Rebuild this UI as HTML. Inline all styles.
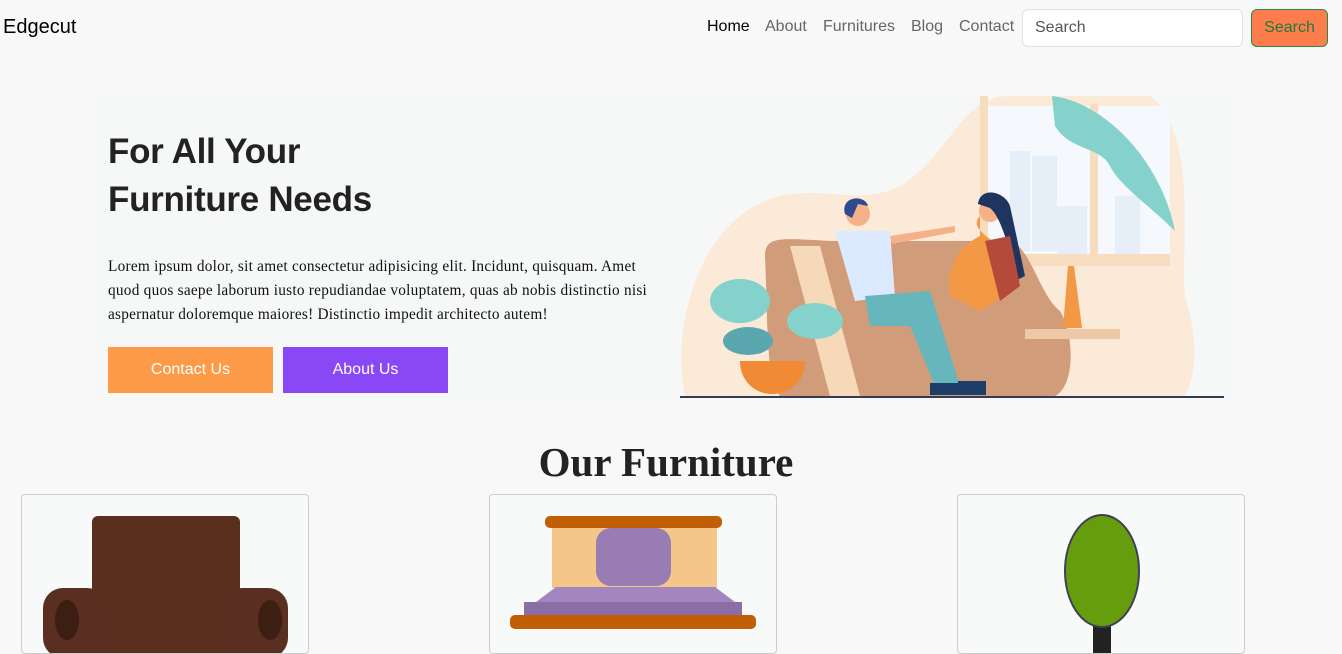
<!DOCTYPE html>
<html><head><meta charset="utf-8"><style>
*{box-sizing:border-box;margin:0;padding:0}
body{width:1342px;height:633px;overflow:hidden;background:#f8f8f8;font-family:"Liberation Sans",sans-serif;position:relative}
.brand{position:absolute;left:3px;top:16px;font-size:20px;color:#000}
.nav{position:absolute;top:18px;font-size:16px;color:#666}
.search{position:absolute;left:1022px;top:9px;width:221px;height:38px;background:#fff;border:1px solid #dee2e6;border-radius:6px;padding:9px 12px;font-size:16px;color:#555}
.btn{position:absolute;left:1251px;top:9px;width:77px;height:38px;background:#fd7e4c;border:1px solid #2a8a4a;border-radius:6px;color:#1f7a3e;font-size:16px;text-align:center;line-height:36px}
.hero{position:absolute;left:96px;top:96px;width:1140px;height:302px;background:#f6f8f8}
h1{position:absolute;left:108px;top:128px;font-size:35px;line-height:48px;color:#222;font-weight:bold;letter-spacing:-0.3px}
p.t{position:absolute;left:108px;top:255px;width:560px;font-family:"Liberation Serif",serif;font-size:15.3px;line-height:24px;color:#111;letter-spacing:0.25px;white-space:nowrap}
.b{position:absolute;top:347px;height:46px;width:165px;color:#fff;font-size:16px;text-align:center;line-height:46px}
h2{position:absolute;left:0;width:1332px;text-align:center;top:438px;font-family:"Liberation Serif",serif;font-size:41px;color:#222;font-weight:bold}
.card{position:absolute;top:494px;width:288px;height:160px;background:#f8faf9;border:1px solid #ccc;border-radius:4px;overflow:hidden}
</style></head><body>
<div class="brand">Edgecut</div>
<div class="nav" style="left:707px;color:#000">Home</div>
<div class="nav" style="left:765px">About</div>
<div class="nav" style="left:823px">Furnitures</div>
<div class="nav" style="left:911px">Blog</div>
<div class="nav" style="left:959px">Contact</div>
<div class="search">Search</div>
<div class="btn">Search</div>
<div class="hero"></div>
<h1>For All Your<br>Furniture Needs</h1>
<p class="t">Lorem ipsum dolor, sit amet consectetur adipisicing elit. Incidunt, quisquam. Amet<br>quod quos saepe laborum iusto repudiandae voluptatem, quas ab nobis distinctio nisi<br>aspernatur doloremque maiores! Distinctio impedit architecto autem!</p>
<div class="b" style="left:108px;background:#fd9a48">Contact Us</div>
<div class="b" style="left:283px;background:#8a47f5">About Us</div>
<svg style="position:absolute;left:680px;top:96px" width="550" height="303" viewBox="0 0 550 303">
<path d="M5 300 C-10 230 20 120 100 100 C150 90 180 110 220 90 C270 60 280 0 330 0 L470 0 C520 40 500 160 505 200 C520 250 515 280 505 300 Z" fill="#fbead8"/>
<rect x="300" y="10" width="190" height="150" fill="#f5f8fc"/>
<rect x="330" y="55" width="20" height="100" fill="#e6eef8"/><rect x="352" y="60" width="25" height="95" fill="#e6eef8"/>
<rect x="377" y="110" width="30" height="50" fill="#e6eef8"/><rect x="435" y="100" width="25" height="60" fill="#e6eef8"/>
<rect x="300" y="0" width="8" height="165" fill="#f7dcc0"/><rect x="410" y="8" width="8" height="160" fill="#f7dcc0"/>
<rect x="300" y="158" width="190" height="12" fill="#f7dcc0"/>
<path d="M372 0 C420 5 480 60 495 135 C470 110 440 90 430 70 C420 50 390 55 375 30 Z" fill="#85d1cc"/>
<path d="M85 160 C85 140 100 142 150 145 L330 145 C350 150 360 200 380 215 C395 240 395 290 375 300 L100 300 C85 280 88 220 85 160 Z" fill="#d19c79"/>
<path d="M110 150 L140 150 L180 300 L150 300 Z" fill="#f6d9b9"/>
<path d="M155 135 L210 135 L215 200 L175 205 Z" fill="#dbeaff"/>
<path d="M185 200 L250 195 L280 290 L255 290 L230 230 L190 230 Z" fill="#66b6bb"/>
<rect x="250" y="287" width="30" height="12" fill="#1d3d6b"/><rect x="278" y="285" width="28" height="14" fill="#1d3d6b"/>
<circle cx="178" cy="118" r="12" fill="#f5b187"/><path d="M165 118 C160 100 185 98 188 110 L178 108 L172 122 Z" fill="#2f4b8f"/>
<path d="M210 140 L275 130 L275 136 L212 148 Z" fill="#f5b187"/>
<path d="M300 120 C290 130 305 140 320 150 L325 200 L300 215 L270 200 C265 170 280 150 300 140 Z" fill="#f39945"/>
<circle cx="310" cy="115" r="11" fill="#f5b187"/>
<path d="M298 108 C300 90 325 95 330 110 L345 180 L335 185 C330 150 320 120 310 112 Z" fill="#1f3560"/>
<path d="M305 145 L330 140 L340 190 L320 205 Z" fill="#b54a3a"/>
<rect x="345" y="233" width="95" height="10" fill="#edc9a8"/>
<path d="M388 170 L394 170 L402 232 L383 232 Z" fill="#f39945"/>
<path d="M0 301 L544 301" stroke="#333b55" stroke-width="2"/>
<path d="M60 265 L125 265 C125 285 110 298 92 298 C75 298 60 285 60 265 Z" fill="#f08a35"/>
<ellipse cx="60" cy="205" rx="30" ry="22" fill="#85d1cc"/><ellipse cx="135" cy="225" rx="28" ry="18" fill="#85d1cc"/><ellipse cx="68" cy="245" rx="25" ry="14" fill="#5ba7b0"/>
</svg>
<h2>Our Furniture</h2>
<div class="card" style="left:21px">
<svg width="288" height="160"><rect x="70" y="21" width="148" height="140" rx="6" fill="#5a2f1e"/><rect x="21" y="93" width="64" height="70" rx="20" fill="#5a2e20"/><rect x="200" y="93" width="66" height="70" rx="20" fill="#5a2e20"/><ellipse cx="45" cy="125" rx="12" ry="20" fill="#3c1e12"/><ellipse cx="248" cy="125" rx="12" ry="20" fill="#3c1e12"/></svg></div>
<div class="card" style="left:489px">
<svg width="288" height="160"><rect x="55" y="21" width="177" height="12" rx="5" fill="#c15f04"/><rect x="62" y="33" width="165" height="60" fill="#f5c68a"/><rect x="106" y="33" width="75" height="58" rx="15" fill="#9a7cb5"/><path d="M46 107 L66 92 L225 92 L245 107 Z" fill="#a386c0"/><rect x="34" y="107" width="218" height="14" fill="#8b6ea3"/><rect x="20" y="120" width="246" height="14" rx="5" fill="#c15f04"/></svg></div>
<div class="card" style="left:957px">
<svg width="288" height="160"><rect x="135" y="120" width="18" height="40" fill="#222"/><ellipse cx="144" cy="76" rx="37" ry="56" fill="#659d0d" stroke="#3e3e55" stroke-width="2"/></svg></div>
</body></html>
